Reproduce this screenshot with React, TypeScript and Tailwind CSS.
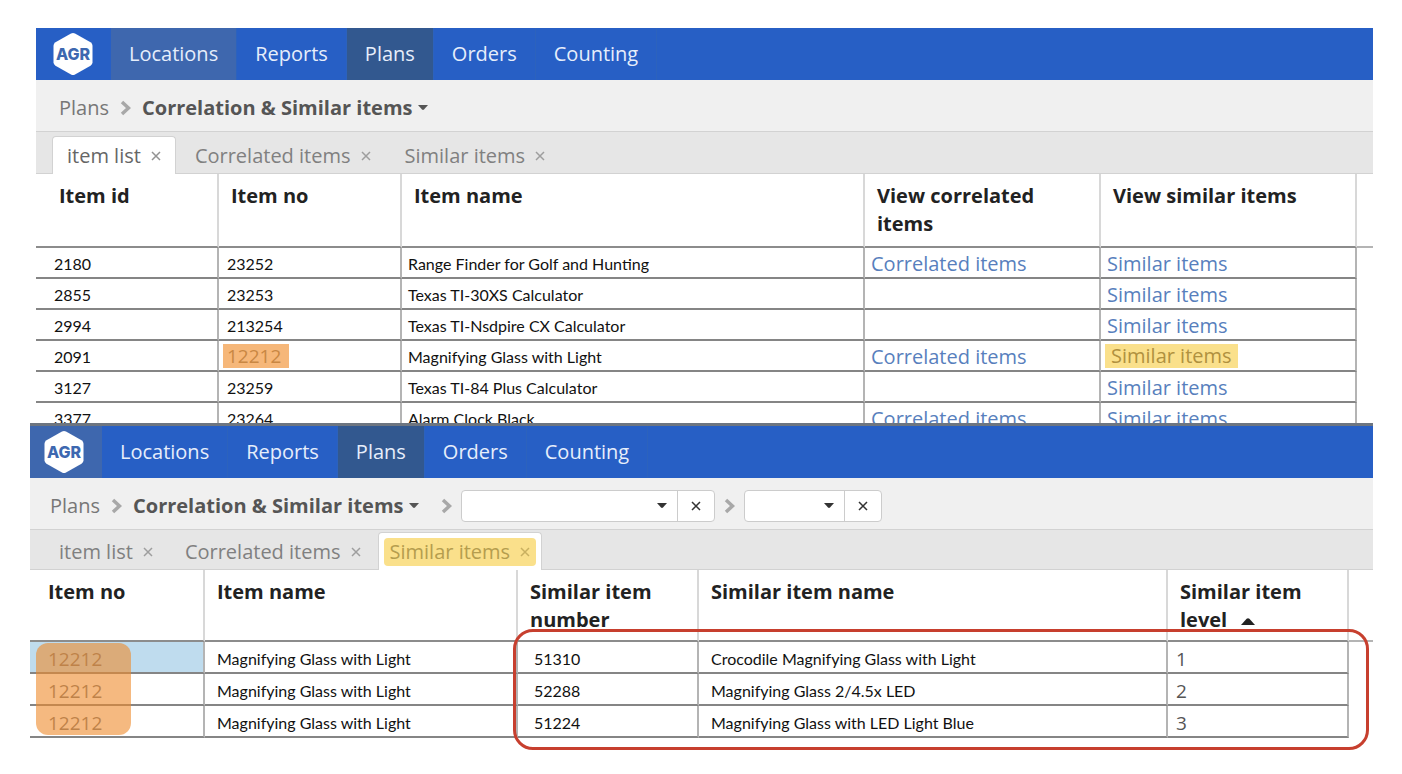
import clsx from "clsx";
import { ReactNode } from "react";

interface IColumn {
  title: string;
  width?: string;
  headClass: string;
  cellClass: string;
  sorted?: boolean;
}

interface ITab {
  label: string;
  active?: boolean;
  marked?: boolean;
}

const navItems = ["Locations", "Reports", "Plans", "Orders", "Counting"];

const Caret = ({ className = "h-[5px] w-[10px]" }: { className?: string }) => (
  <svg
    viewBox="0 0 10 5"
    className={clsx("shrink-0", className)}
    aria-hidden="true"
  >
    <path d="M0 0h10L6 4.5q-1 .8-2 0z" fill="currentColor" />
  </svg>
);

const Chevron = ({ className }: { className?: string }) => (
  <svg
    viewBox="0 0 11 16"
    className={clsx("h-4 w-[11px] shrink-0 text-[#a8a8a8]", className)}
    aria-hidden="true"
  >
    <path
      d="M2 2l6.500 6L2 14"
      fill="none"
      stroke="currentColor"
      strokeWidth="3.500"
    />
  </svg>
);

const Cross = () => (
  <svg viewBox="0 0 10 10" className="size-[10px]" aria-hidden="true">
    <path
      d="M1 1l8 8M9 1L1 9"
      fill="none"
      stroke="currentColor"
      strokeWidth="1.500"
    />
  </svg>
);

const Logo = () => (
  <svg viewBox="0 0 40 42" className="h-[42px] w-10" aria-label="AGR">
    <path
      d="M18 .6q2-1 4 0l15.500 8.600q2 1.200 2 3.500v16.600q0 2.300-2 3.500L22 41.400q-2 1-4 0L2.500 32.800q-2-1.200-2-3.500V12.700q0-2.300 2-3.500z"
      fill="#fff"
    />
    <text
      x="20"
      y="27"
      textAnchor="middle"
      fontFamily="Inter, sans-serif"
      fontWeight="800"
      fontSize="16"
      fill="#3d68b0"
    >
      AGR
    </text>
  </svg>
);

const NavBar = ({
  hovered,
  logoClass,
}: {
  hovered?: string;
  logoClass: string;
}) => (
  <nav className="flex h-[52px] bg-[#275fc5]">
    <a href="#home" className={clsx("flex items-center", logoClass)}>
      <Logo />
    </a>
    {navItems.map((item) => (
      <a
        key={item}
        href={`#${item.toLowerCase()}`}
        className={clsx(
          "flex items-center border-r border-[#2c62bd] px-[18px] text-xl text-[#e6eefb]",
          item === "Plans" && "bg-[#32588f]",
          item === hovered && "bg-[#3e67ae]"
        )}
      >
        {item}
      </a>
    ))}
  </nav>
);

const Picker = ({ label, width }: { label: string; width: string }) => (
  <div className="flex h-8 overflow-hidden rounded-sm border border-[#cccccc] bg-white text-[#333333]">
    <div className={clsx("relative flex items-center", width)}>
      <select
        aria-label={label}
        className="h-full w-full appearance-none bg-transparent px-2"
      />
      <Caret className="pointer-events-none absolute right-[10px] h-[5px] w-[10px]" />
    </div>
    <button
      aria-label={`Clear ${label}`}
      className="flex w-[37px] items-center justify-center border-l border-[#cccccc]"
    >
      <Cross />
    </button>
  </div>
);

const Breadcrumb = ({
  className,
  children,
}: {
  className: string;
  children?: ReactNode;
}) => (
  <div
    className={clsx(
      "flex h-[52px] items-center border-b border-[#d2d2d2] bg-[#f0f0f0] pt-1 text-xl",
      className
    )}
  >
    <a href="#plans" className="text-[#777777]">
      Plans
    </a>
    <Chevron className="mx-[11px]" />
    <button className="flex items-center gap-[5px] font-bold text-[#555555]">
      Correlation &amp; Similar items
      <Caret />
    </button>
    {children}
  </div>
);

const Tabs = ({ tabs, className }: { tabs: ITab[]; className: string }) => (
  <div
    className={clsx(
      "flex items-end border-b border-[#d2d2d2] bg-[#e6e6e6]",
      className
    )}
  >
    {tabs.map(({ label, active, marked }) => (
      <div
        key={label}
        className={clsx(
          "-mb-px flex h-[38px] items-center rounded-t border border-b-0",
          active ? "border-[#d2d2d2] bg-white" : "border-transparent",
          marked ? "px-[5px]" : "px-[14px]"
        )}
      >
        <div
          className={clsx(
            "flex items-center gap-[10px]",
            marked
              ? "rounded bg-[#fae08b] px-[6px] text-[#b59d4e]"
              : active
                ? "text-[#666666]"
                : "text-[#808080]"
          )}
        >
          <button className="text-xl leading-7">{label}</button>
          <button aria-label={`Close ${label}`} className="opacity-70">
            <Cross />
          </button>
        </div>
      </div>
    ))}
  </div>
);

const DataTable = ({
  columns,
  rows,
  tail,
  headHeight,
  rowHeight,
}: {
  columns: IColumn[];
  rows: ReactNode[][];
  tail: string;
  headHeight: string;
  rowHeight: string;
}) => (
  <table className="w-full table-fixed border-separate border-spacing-0 bg-white text-left">
    <colgroup>
      {columns.map(({ title, width }) => (
        <col key={title} className={width} />
      ))}
      <col className={tail} />
    </colgroup>
    <thead>
      <tr className={headHeight}>
        {columns.map(({ title, headClass, sorted }) => (
          <th
            key={title}
            className={clsx(
              "border-r-2 border-b-2 border-r-[#d8d8d8] border-b-[#8c8c8c] pt-2 align-top text-xl leading-7 font-bold text-[#222222]",
              headClass
            )}
          >
            {title}
            {sorted && (
              <Caret className="ml-[14px] inline h-[7px] w-[14px] rotate-180" />
            )}
          </th>
        ))}
        <td className="border-b-2 border-[#b4b4b4]" />
      </tr>
    </thead>
    <tbody>
      {rows.map((row, index) => (
        <tr key={index} className={rowHeight}>
          {row.map((cell, i) => (
            <td
              key={i}
              className={clsx(
                "border-r-2 border-b-2 border-r-[#b4b4b4] border-b-[#858585] pt-[3px] leading-6 whitespace-nowrap",
                columns[i].cellClass,
                index === 0 &&
                  columns[i].title === "Item no" &&
                  i === 0 &&
                  "bg-[#bfdcee]"
              )}
            >
              {cell}
            </td>
          ))}
          <td />
        </tr>
      ))}
    </tbody>
  </table>
);

const ViewLink = ({
  children,
  marked,
}: {
  children: string;
  marked?: boolean;
}) => (
  <a
    href="#view"
    className={clsx(
      "block text-xl leading-6",
      marked
        ? "-mt-0.5 -ml-0.5 w-fit bg-[#fae08b] px-[6px] text-[#b0913f]"
        : "text-[#587fbd]"
    )}
  >
    {children}
  </a>
);

const itemColumns: IColumn[] = [
  { title: "Item id", width: "w-[183px]", headClass: "pl-[23px]", cellClass: "pl-[18px] font-[Lato,sans-serif] text-base" },
  { title: "Item no", width: "w-[183px]", headClass: "pl-3", cellClass: "pl-2 font-[Lato,sans-serif] text-base" },
  { title: "Item name", headClass: "pl-3", cellClass: "pl-[6px] font-[Lato,sans-serif] text-base" },
  { title: "View correlated items", width: "w-[236px]", headClass: "pl-3 pr-8", cellClass: "pl-[6px]" },
  { title: "View similar items", width: "w-[256px]", headClass: "pl-3", cellClass: "pl-[6px]" },
];

const correlated = <ViewLink>Correlated items</ViewLink>;
const similar = <ViewLink>Similar items</ViewLink>;

const itemRows: ReactNode[][] = [
  ["2180", "23252", "Range Finder for Golf and Hunting", correlated, similar],
  ["2855", "23253", "Texas TI-30XS Calculator", "", similar],
  ["2994", "213254", "Texas TI-Nsdpire CX Calculator", "", similar],
  [
    "2091",
    <span className="-mt-0.5 -ml-1 block w-fit bg-[#f6b779] px-1 pr-2 font-['Open_Sans',sans-serif] text-[19px] leading-6 text-[#c98743]">
      12212
    </span>,
    "Magnifying Glass with Light",
    correlated,
    <ViewLink marked>Similar items</ViewLink>,
  ],
  ["3127", "23259", "Texas TI-84 Plus Calculator", "", similar],
  ["3377", "23264", "Alarm Clock Black", correlated, similar],
];

const similarColumns: IColumn[] = [
  { title: "Item no", width: "w-[175px]", headClass: "pl-[18px]", cellClass: "pl-[18px] text-[19px] text-[#777777]" },
  { title: "Item name", width: "w-[313px]", headClass: "pl-3", cellClass: "pl-3 font-[Lato,sans-serif] text-base" },
  { title: "Similar item number", width: "w-[181px]", headClass: "pl-3 pr-8", cellClass: "pl-4 font-[Lato,sans-serif] text-base" },
  { title: "Similar item name", headClass: "pl-3", cellClass: "pl-3 font-[Lato,sans-serif] text-base" },
  { title: "Similar item level", width: "w-[181px]", headClass: "pl-3 pr-8", cellClass: "pl-2 text-[19px] text-[#555555]", sorted: true },
];

const similarRows: ReactNode[][] = [
  ["12212", "Magnifying Glass with Light", "51310", "Crocodile Magnifying Glass with Light", "1"],
  ["12212", "Magnifying Glass with Light", "52288", "Magnifying Glass 2/4.5x LED", "2"],
  ["12212", "Magnifying Glass with Light", "51224", "Magnifying Glass with LED Light Blue", "3"],
];

export default function App() {
  return (
    <main className="min-h-screen bg-white pt-7 pr-[29px] pl-[30px] font-['Open_Sans',sans-serif] text-[#111111]">
      <section className="ml-[6px]">
        <NavBar hovered="Locations" logoClass="w-[75px] pl-[17px]" />
        <Breadcrumb className="pl-[23px]" />
        <Tabs
          className="h-[42px] gap-1 pl-4"
          tabs={[
            { label: "item list", active: true },
            { label: "Correlated items" },
            { label: "Similar items" },
          ]}
        />
        <div className="h-[249px] overflow-hidden">
          <DataTable
            columns={itemColumns}
            rows={itemRows}
            tail="w-4"
            headHeight="h-[74px]"
            rowHeight="h-[31px]"
          />
        </div>
      </section>

      <section className="border-t-3 border-[#6d7580]">
        <NavBar logoClass="w-[72px] bg-[#3e67ae] pl-[14px]" />
        <Breadcrumb className="pl-5">
          <Chevron className="mr-[9px] ml-[22px]" />
          <Picker label="Item" width="w-[215px]" />
          <Chevron className="mx-[9px]" />
          <Picker label="Level" width="w-[99px]" />
        </Breadcrumb>
        <Tabs
          className="h-10 gap-0.5 pl-[14px]"
          tabs={[
            { label: "item list" },
            { label: "Correlated items" },
            { label: "Similar items", active: true, marked: true },
          ]}
        />
        <div className="relative">
          <DataTable
            columns={similarColumns}
            rows={similarRows}
            tail="w-6"
            headHeight="h-[72px]"
            rowHeight="h-8"
          />
          <div className="pointer-events-none absolute top-[73px] left-[6px] h-[92px] w-[95px] rounded-xl bg-[#ef8a2b]/60" />
          <div className="pointer-events-none absolute top-[59px] right-1 -bottom-3 left-[483px] rounded-[20px] border-3 border-[#c73f2e]" />
        </div>
      </section>
    </main>
  );
}
